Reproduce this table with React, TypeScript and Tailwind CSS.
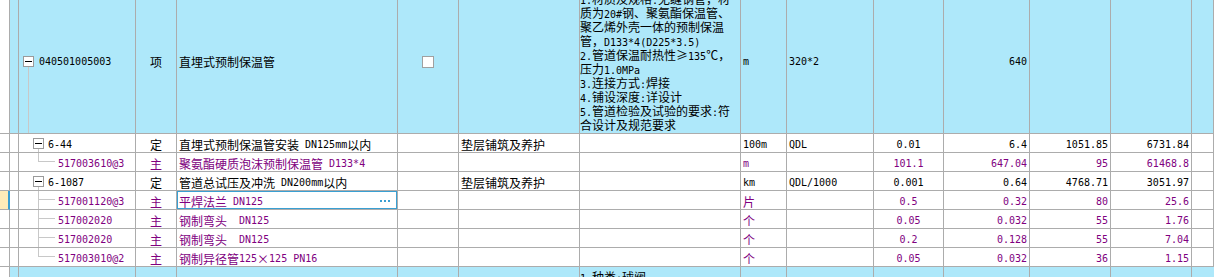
import React from "react";

const COLS =
  "grid grid-cols-[10px_9px_117px_41px_221px_61px_121px_161px_46px_87px_70px_86px_81px_81px_1fr]";
const CELL = "relative border-r border-b border-[#acacac] flex items-center overflow-hidden whitespace-nowrap";
const BLUE = "bg-[#aee8fa]";

function T({ s }: { s: string }) {
  const parts = s.split(/([\x20-\x7e]+)/);
  return (
    <>
      {parts.map((p, i) =>
        i % 2 === 1 ? (
          <span key={i} className="font-['DejaVu_Sans_Mono',monospace] text-[10px] whitespace-pre">
            {p}
          </span>
        ) : (
          <span key={i}>{p}</span>
        )
      )}
    </>
  );
}

type Row = {
  code: string;
  kind: "l1" | "mid" | "last";
  type: string;
  name: string;
  work?: string;
  unit: string;
  expr?: string;
  qty: string;
  amt: string;
  price: string;
  total: string;
  purple?: boolean;
  selected?: boolean;
};

const rows: Row[] = [
  { code: "6-44", kind: "l1", type: "定", name: "直埋式预制保温管安装 DN125mm以内", work: "垫层铺筑及养护", unit: "100m", expr: "QDL", qty: "0.01", amt: "6.4", price: "1051.85", total: "6731.84" },
  { code: "517003610@3", kind: "last", type: "主", name: "聚氨酯硬质泡沫预制保温管 D133*4", unit: "m", qty: "101.1", amt: "647.04", price: "95", total: "61468.8", purple: true },
  { code: "6-1087", kind: "l1", type: "定", name: "管道总试压及冲洗 DN200mm以内", work: "垫层铺筑及养护", unit: "km", expr: "QDL/1000", qty: "0.001", amt: "0.64", price: "4768.71", total: "3051.97" },
  { code: "517001120@3", kind: "mid", type: "主", name: "平焊法兰 DN125", unit: "片", qty: "0.5", amt: "0.32", price: "80", total: "25.6", purple: true, selected: true },
  { code: "517002020", kind: "mid", type: "主", name: "钢制弯头  DN125", unit: "个", qty: "0.05", amt: "0.032", price: "55", total: "1.76", purple: true },
  { code: "517002020", kind: "mid", type: "主", name: "钢制弯头  DN125", unit: "个", qty: "0.2", amt: "0.128", price: "55", total: "7.04", purple: true },
  { code: "517003010@2", kind: "last", type: "主", name: "钢制异径管125×125 PN16", unit: "个", qty: "0.05", amt: "0.032", price: "36", total: "1.15", purple: true },
];

const desc = [
  "1.材质及规格:无缝钢管，材",
  "质为20#钢、聚氨酯保温管、",
  "聚乙烯外壳一体的预制保温",
  "管，D133*4(D225*3.5)",
  "2.管道保温耐热性≥135℃，",
  "压力1.0MPa",
  "3.连接方式:焊接",
  "4.铺设深度:详设计",
  "5.管道检验及试验的要求:符",
  "合设计及规范要求",
];

function Box() {
  return (
    <div className="w-[11px] h-[11px] border border-[#9a9a9a] bg-white flex items-center justify-center">
      <div className="w-[7px] h-[1px] bg-black" />
    </div>
  );
}

function TreeCell({ r }: { r: Row }) {
  if (r.kind === "l1") {
    return (
      <div className={`${CELL} pl-[29px] pt-[3px]`}>
        <div className="absolute left-[9px] top-0 bottom-0 w-[1px]" />
        <div className="absolute left-[14px] top-[4px]">
          <Box />
        </div>
        <div className="absolute left-[19px] top-[15px] bottom-0 w-[1px] bg-[#c8c8c8]" />
        <T s={r.code} />
      </div>
    );
  }
  return (
    <div className={`${CELL} pl-[39px] pt-[3px]`}>
      {r.kind === "mid" ? (
        <div className="absolute left-[19px] top-0 bottom-0 w-[1px] bg-[#c8c8c8]" />
      ) : (
        <div className="absolute left-[19px] top-0 h-[9px] w-[1px] bg-[#c8c8c8]" />
      )}
      <div className="absolute left-[19px] top-[8px] w-[17px] h-[1px] bg-[#c8c8c8]" />
      <T s={r.code} />
    </div>
  );
}

function DataRow({ r }: { r: Row }) {
  const color = r.purple ? "text-[#800080]" : "text-black";
  return (
    <div className={`${COLS} h-[19px] ${color}`}>
      {r.selected ? (
        <div className="border-b border-[#acacac] border-r-2 border-r-[#3a9fd2] bg-[#feecb9]" />
      ) : (
        <div className="border-r border-b border-[#acacac] bg-white" />
      )}
      <div className="border-r border-b border-[#acacac] bg-white" />
      <TreeCell r={r} />
      <div className={`${CELL} justify-center pt-[3px]`}>{r.type}</div>
      <div className={`${CELL} pl-[2px] pt-[3px]`}>
        <T s={r.name} />
        {r.selected && (
          <div className="absolute -left-[1px] -right-[1px] -top-[1px] -bottom-[1px] border-2 border-[#3a9fd2] flex items-center justify-end pr-[6px]">
            <div className="flex gap-[2px] mt-[1px]">
              <div className="w-[2px] h-[2px] bg-[#3a9fd2]" />
              <div className="w-[2px] h-[2px] bg-[#3a9fd2]" />
              <div className="w-[2px] h-[2px] bg-[#3a9fd2]" />
            </div>
          </div>
        )}
      </div>
      <div className={CELL} />
      <div className={`${CELL} pl-[2px] pt-[3px]`}>{r.work ? <T s={r.work} /> : null}</div>
      <div className={CELL} />
      <div className={`${CELL} pl-[2px] pt-[3px]`}>
        <T s={r.unit} />
      </div>
      <div className={`${CELL} pl-[2px] pt-[3px]`}>{r.expr ? <T s={r.expr} /> : null}</div>
      <div className={`${CELL} justify-center pt-[3px]`}>
        <T s={r.qty} />
      </div>
      <div className={`${CELL} justify-end pr-[2px] pt-[3px]`}>
        <T s={r.amt} />
      </div>
      <div className={`${CELL} justify-end pr-[2px] pt-[3px]`}>
        <T s={r.price} />
      </div>
      <div className={`${CELL} justify-end pr-[2px] pt-[3px]`}>
        <T s={r.total} />
      </div>
      <div className={CELL} />
    </div>
  );
}

export default function App() {
  return (
    <div className="w-[1214px] h-[277px] overflow-hidden bg-white font-['Noto_Sans_CJK_SC',sans-serif] text-[12px] leading-[14px] text-black">
      <div className="-mt-[9px]">
        {/* top row */}
        <div className={`${COLS} h-[143px]`}>
          <div className="border-r border-b border-[#acacac] bg-white" />
          <div className={`border-r border-b border-[#acacac] ${BLUE}`} />
          <div className={`${CELL} ${BLUE} pl-[20px]`}>
            <div className="absolute left-[4px] top-[65px]">
              <Box />
            </div>
            <div className="absolute left-[9px] top-[76px] bottom-0 w-[1px] bg-[#c8c8c8]" />
            <T s="040501005003" />
          </div>
          <div className={`${CELL} ${BLUE} justify-center`}>项</div>
          <div className={`${CELL} ${BLUE} pl-[2px]`}>直埋式预制保温管</div>
          <div className={`${CELL} ${BLUE} justify-center`}>
            <div className="w-[12px] h-[12px] bg-white border border-[#a0a0a0]" />
          </div>
          <div className={`${CELL} ${BLUE}`} />
          <div className={`${CELL} ${BLUE} flex-col justify-center items-start`}>
            {desc.map((d, i) => (
              <div key={i} className="h-[14px] whitespace-nowrap">
                <T s={d} />
              </div>
            ))}
          </div>
          <div className={`${CELL} ${BLUE} pl-[2px]`}>
            <T s="m" />
          </div>
          <div className={`${CELL} ${BLUE} pl-[2px]`}>
            <T s="320*2" />
          </div>
          <div className={`${CELL} ${BLUE}`} />
          <div className={`${CELL} ${BLUE} justify-end pr-[2px]`}>
            <T s="640" />
          </div>
          <div className={`${CELL} ${BLUE}`} />
          <div className={`${CELL} ${BLUE}`} />
          <div className={`${CELL} ${BLUE}`} />
        </div>

        {rows.map((r, i) => (
          <DataRow key={i} r={r} />
        ))}

        {/* partial bottom row */}
        <div className={`${COLS} h-[40px]`}>
          <div className="border-r border-[#acacac] bg-white" />
          <div className={`border-r border-[#acacac] ${BLUE}`} />
          <div className={`border-r border-[#acacac] ${BLUE}`} />
          <div className={`border-r border-[#acacac] ${BLUE}`} />
          <div className={`border-r border-[#acacac] ${BLUE}`} />
          <div className={`border-r border-[#acacac] ${BLUE}`} />
          <div className={`border-r border-[#acacac] ${BLUE}`} />
          <div className={`border-r border-[#acacac] ${BLUE} pt-[3px] whitespace-nowrap`}>
            <T s="1.种类:球阀" />
          </div>
          <div className={`border-r border-[#acacac] ${BLUE}`} />
          <div className={`border-r border-[#acacac] ${BLUE}`} />
          <div className={`border-r border-[#acacac] ${BLUE}`} />
          <div className={`border-r border-[#acacac] ${BLUE}`} />
          <div className={`border-r border-[#acacac] ${BLUE}`} />
          <div className={`border-r border-[#acacac] ${BLUE}`} />
          <div className={BLUE} />
        </div>
      </div>
    </div>
  );
}
